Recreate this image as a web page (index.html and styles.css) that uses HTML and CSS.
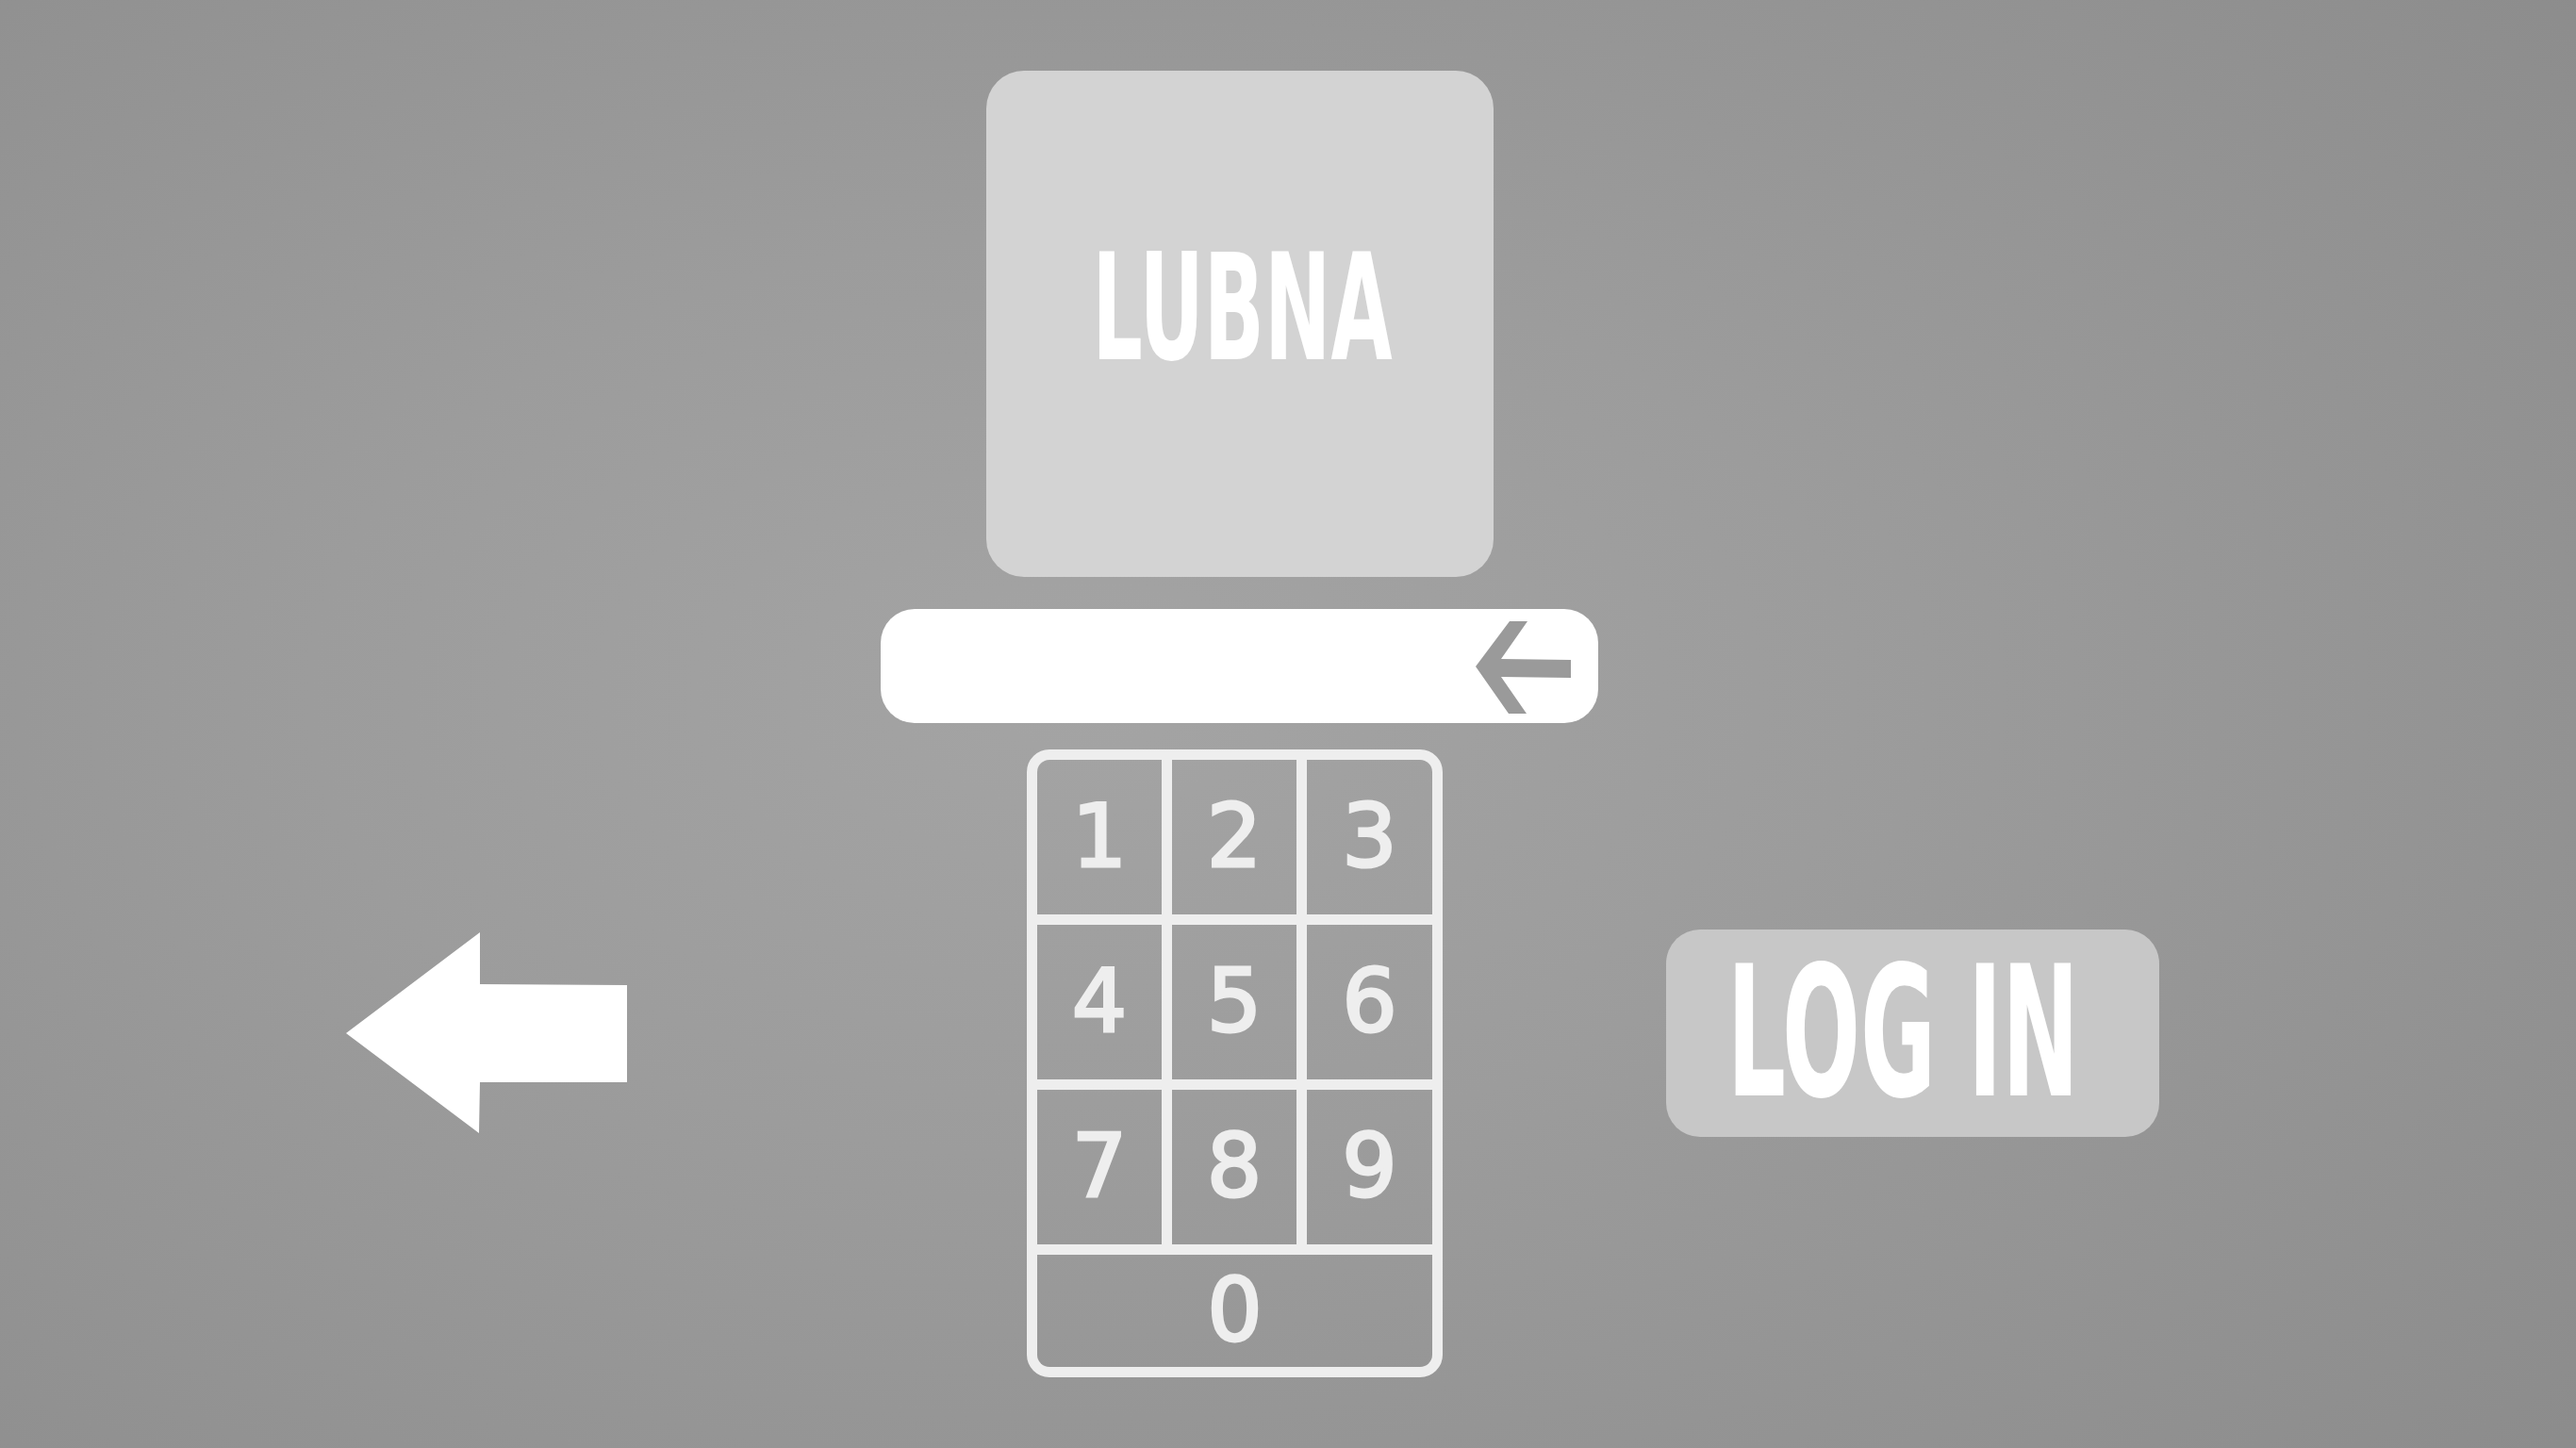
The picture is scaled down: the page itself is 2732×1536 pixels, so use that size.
FILE: index.html
```html
<!DOCTYPE html>
<html lang="en">
<head>
    <meta charset="UTF-8">
    <meta name="viewport" content="width=device-width, initial-scale=1.0">
    <title>Log in</title>
    <link rel="stylesheet" href="styles.css">
</head>
<body>
    <main class="screen">
        <div class="side side-left">
            <button class="back-btn" aria-label="Back">
                <svg width="298" height="213" viewBox="0 0 298 213">
                    <polygon points="0,107 142,0 142,55 298,56 298,159 142,159 141,213" fill="#ffffff"/>
                </svg>
            </button>
        </div>

        <div class="center">
            <div class="avatar-card">
                <span class="user-name">LUBNA</span>
            </div>

            <div class="pin-field">
                <!-- backspace arrow -->
                <svg class="clear-icon" width="101" height="98" viewBox="0 0 101 98">
                    <polygon points="0,48 36,0 55,0 27,40 101,41 101,60 27,59 54,98 35,98" fill="#9a9a9a"/>
                </svg>
            </div>

            <div class="keypad">
                <button class="key key-tl">1</button>
                <button class="key">2</button>
                <button class="key key-tr">3</button>
                <button class="key">4</button>
                <button class="key">5</button>
                <button class="key">6</button>
                <button class="key">7</button>
                <button class="key">8</button>
                <button class="key">9</button>
                <button class="key key-zero">0</button>
            </div>
        </div>

        <div class="side side-right">
            <button class="login-btn"><span class="login-label">LOG IN</span></button>
        </div>
    </main>
</body>
</html>
```

FILE: styles.css
```css
:root {
    --bg: radial-gradient(ellipse 75% 80% at 42% 48%, #a4a4a4 0%, #9c9c9c 40%, #8c8c8c 100%);
    --line-color: #eeeeee;
    --card-color: #d3d3d3;
    --button-color: #c7c7c7;
}
html, body {
    margin: 0;
    padding: 0;
    width: 2732px;
    height: 1536px;
    overflow: hidden;
}
body {
    background: var(--bg);
    background-attachment: fixed;
    font-family: 'DejaVu Sans', sans-serif;
}
button {
    border: none;
    background: none;
    padding: 0;
    margin: 0;
    cursor: pointer;
}
.screen {
    display: grid;
    grid-template-columns: 934px 761px 1037px;
    height: 1536px;
}
.side-left {
    padding-left: 367px;
    padding-top: 989px;
}
.back-btn svg {
    display: block;
}
.side-right {
    padding-left: 72px;
    padding-top: 986px;
}
.center {
    display: flex;
    flex-direction: column;
    align-items: center;
    padding-top: 75px;
}
.avatar-card {
    width: 538px;
    height: 537px;
    background-color: var(--card-color);
    border-radius: 40px;
    display: flex;
    align-items: center;
    justify-content: center;
    padding-bottom: 34px;
    box-sizing: border-box;
}
.user-name,
.login-label {
    display: inline-block;
    font-family: 'Liberation Sans Narrow', 'DejaVu Sans Condensed', 'Liberation Sans', sans-serif;
    font-weight: 700;
    color: #ffffff;
    line-height: 1;
}
.user-name {
    font-size: 156px;
    transform: scaleX(0.6);
    margin-left: 6px;
}
.pin-field {
    width: 761px;
    height: 121px;
    margin-top: 34px;
    background: #ffffff;
    border-radius: 36px;
    display: flex;
    align-items: center;
    justify-content: flex-end;
    padding-right: 29px;
    box-sizing: border-box;
}
.clear-icon {
    display: block;
    margin-top: 2px;
}
.keypad {
    align-self: flex-start;
    margin-left: 155px;
    margin-top: 28px;
    display: grid;
    grid-template-columns: 132px 132px 133px;
    grid-template-rows: 164px 164px 164px 119px;
    gap: 11px;
    border: 11px solid var(--line-color);
    background: var(--line-color);
    border-radius: 24px;
}
.key {
    background: var(--bg);
    background-attachment: fixed;
    font-family: 'DejaVu Sans', sans-serif;
    font-size: 92px;
    line-height: 1;
    color: var(--line-color);
    -webkit-text-stroke: 3px var(--line-color);
    display: flex;
    align-items: center;
    justify-content: center;
}
.key-tl {
    border-top-left-radius: 13px;
}
.key-tr {
    border-top-right-radius: 13px;
}
.key-zero {
    grid-column: 1 / 4;
    border-bottom-left-radius: 13px;
    border-bottom-right-radius: 13px;
}
.login-btn {
    width: 523px;
    height: 220px;
    background-color: var(--button-color);
    border-radius: 36px;
    display: flex;
    align-items: center;
    justify-content: center;
    padding-right: 20px;
    box-sizing: border-box;
}
.login-label {
    font-size: 192px;
    transform: scaleX(0.565);
    white-space: nowrap;
}
```
